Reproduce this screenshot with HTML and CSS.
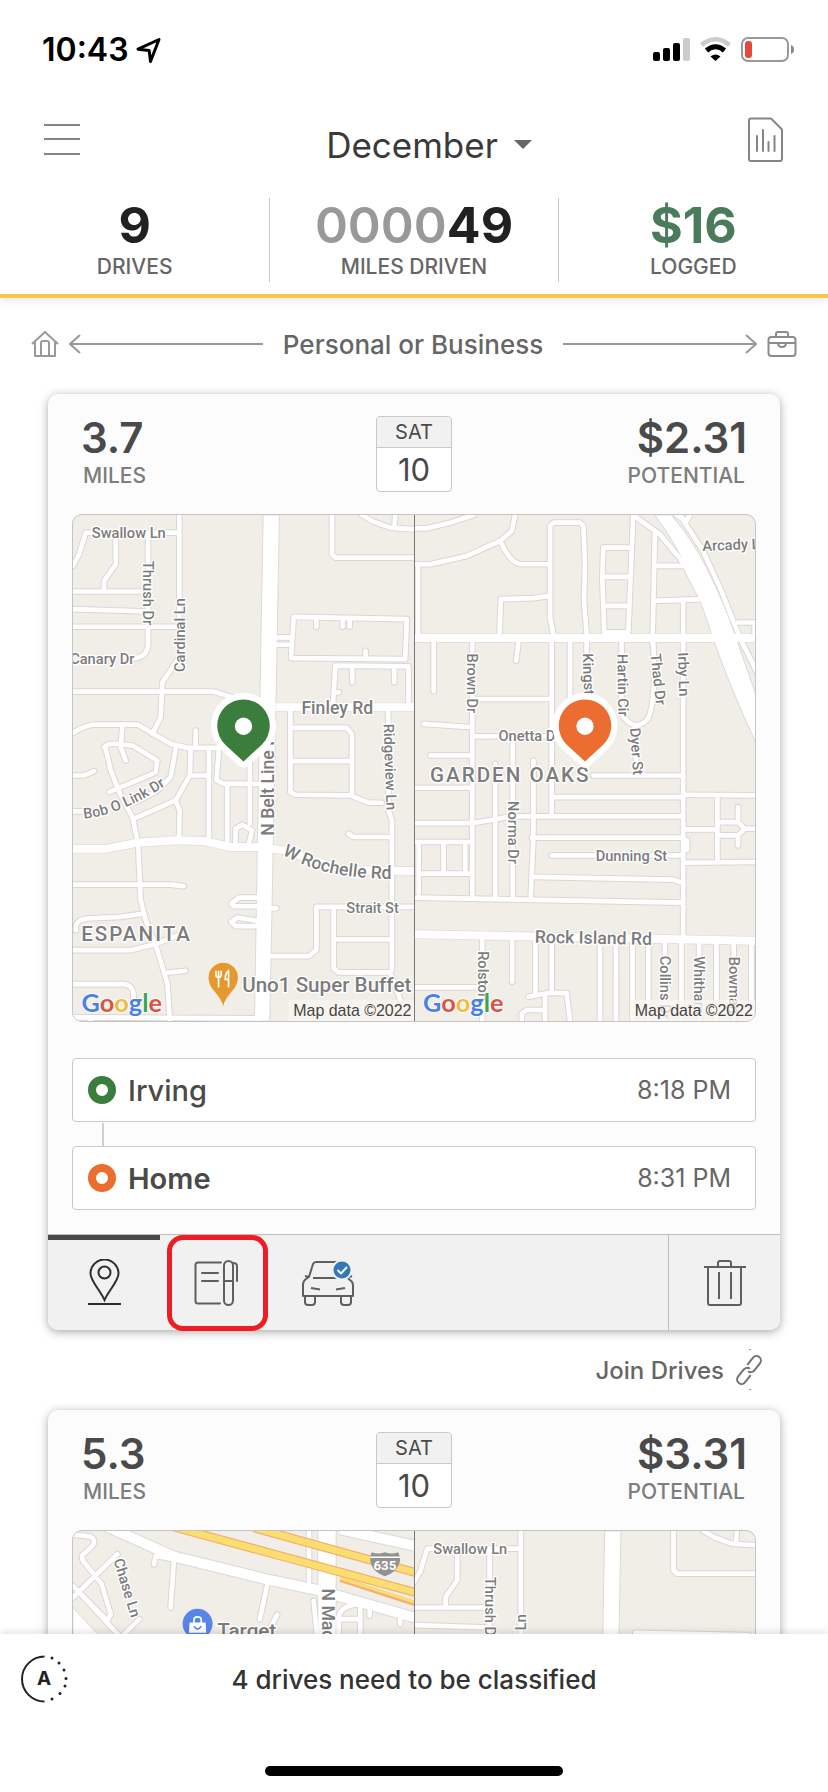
FILE: index.html
```html
<!DOCTYPE html>
<html lang="en">
<head>
<meta charset="utf-8">
<meta name="viewport" content="width=device-width, initial-scale=1">
<title>December drives</title>
<link rel="stylesheet" href="styles.css">
</head>
<body>
<svg class="defs" aria-hidden="true">
  <defs>
    <g id="irving-minor" fill="none">
      <path d="M36 195L55 160L75 95H355M165 100V190L130 240V270M262 100V430Q262 470 215 474M356 42V470L305 545L300 650L275 700M36 272H262M36 325L262 332M36 378H356"/>
      <path d="M36 573H460L550 600H600M185 672L180 740L195 780M405 690V742M275 820L145 875M130 740Q140 728 165 730L215 735L290 780L285 815"/>
      <path d="M345 745L330 830L290 870L225 905M390 745L388 825L345 900L220 955M345 900L357 930L355 1020M388 825H445M445 742V1030M475 742L468 840L490 850H590M500 850V1035M568 780V970M36 825H70L100 812M36 933H100M525 1030V985L545 973L575 990L565 1030"/>
      <path d="M36 1153H330L370 1158M45 1290Q40 1260 80 1255L180 1250L250 1240M36 1350H210L290 1330L365 1300M320 1418L375 1412M36 1452H190Q215 1455 218 1480V1510M36 1552L600 1555M90 1553V1563"/>
      <path d="M590 1192H535L512 1210Q515 1218 530 1218H590M590 1262L530 1252L512 1265L525 1278H590M610 1224H648"/>
      <path d="M815 42V160L825 170H1062M905 42L940 62L990 80L1062 85M1005 42L1003 78M645 410H690M645 432H690M700 348L1040 355L1035 475L692 472ZM768 352V378M847 352V378M868 352V378M916 450V474"/>
      <path d="M818 615L825 495L1045 497V605M876 500V545M1002 500V545M820 575H836M984 635L985 930L995 960V1410M690 635V875L705 883L870 885L925 907H965M690 682H860L875 700V885M690 782H875"/>
      <path d="M865 1000L880 1010H990M630 1368H745L768 1350V1220H1062M820 1220V1405L835 1417H990L1020 1500M820 1318H990"/>
    </g>
    <g id="irving-collector" fill="none">
      <path d="M36 697Q80 670 110 672L230 672L330 730L380 742H480M135 745L150 810L178 880L215 950L232 1030L240 1200L255 1260L290 1350L320 1450L328 1563"/>
    </g>
    <g id="irving-main" fill="none">
      <path d="M36 1045H140L230 1027L350 1020L430 1022L510 1040H600L670 1050L850 1110L1062 1112M645 620H1062"/>
    </g>
    <symbol id="map-irving" viewBox="36 42 1026 1521" preserveAspectRatio="xMidYMin slice">
      <use class="casing" href="#irving-minor"/>
      <use class="casing" href="#irving-collector"/>
      <use class="casing-mid" href="#irving-main"/>
      <path d="M608 42H657L645 700L628 1563H582L595 780Z" fill="#fff" stroke="#dcdad8" stroke-width="3"/>
      <use class="road" href="#irving-minor"/>
      <use class="road" href="#irving-collector"/>
      <use class="road-mid" href="#irving-main"/>
      <path id="bob" d="M70 955Q180 945 330 845" fill="none"/>
      <path id="rochelle" d="M665 1062Q760 1115 870 1128T1030 1132" fill="none"/>
      <g class="map-label">
        <text x="93" y="112">Swallow Ln</text>
        <text transform="translate(247 180) rotate(90)">Thrush Dr</text>
        <text transform="translate(372 514) rotate(-90)">Cardinal Ln</text>
        <text x="28" y="491">Canary Dr</text>
        <text transform="translate(970 670) rotate(88)">Ridgeview Ln</text>
        <text x="858" y="1237">Strait St</text>
        <text><textPath href="#bob">Bob O Link Dr</textPath></text>
      </g>
      <g class="map-label road-name">
        <text x="723" y="640">Finley Rd</text>
        <text transform="translate(640 1006) rotate(-90)">N Belt Line Rd</text>
        <text><textPath href="#rochelle">W Rochelle Rd</textPath></text>
      </g>
      <text class="map-label district" x="61" y="1322">ESPANITA</text>
      <text class="map-label place" x="545" y="1477">Uno1 Super Buffet</text>
      <path d="M488 1519C480 1480 444 1470 444 1432A44 44 0 0 1 532 1432C532 1470 496 1480 488 1519Z" fill="#e6982f"/>
      <path d="M466 1412V1424Q466 1432 474 1432Q482 1432 482 1424V1412M474 1412V1462M504 1462V1412Q494 1418 494 1438H504" fill="none" stroke="#fff" stroke-width="5"/>
    </symbol>

    <g id="home-minor" fill="none">
      <path d="M12 82H50L120 65L190 42M12 190H60L170 165L270 120L305 90L315 42M270 120Q300 185 330 190H415M23 190V400M268 400L272 295L370 292L415 285M430 400L420 350V75L430 65H510L520 75L525 190L522 300L530 400"/>
      <path d="M670 42L655 395M580 140H655M580 140L577 230L583 395H655M577 228H655M580 315H655M735 95L728 430M735 195H820M735 300L885 295M820 300V1310M985 365H1035V400M800 42L830 60L840 42"/>
      <path d="M70 425V572M186 425V1190M325 425L318 480M425 425V945M480 425V600M530 425V600M635 425V640Q670 695 710 660Q740 620 730 425M675 680L680 820M186 595H425M40 670L186 680M186 707H425M60 765H186M308 707V1190M370 780V1012L362 1190M255 790V1190"/>
      <path d="M12 862H186M12 968H190L265 955L300 948H820M550 825H820M425 890H820M365 1012H820M425 1065H820M368 1130L790 1138L810 1145M12 1192L820 1207M12 1025H186M25 1030V1180M100 1030V1120M165 1030V1120M30 1120H186"/>
      <path d="M820 883L1038 885M923 885V1085M820 987H923M820 1087L1038 1085M923 965H985L1005 985H1038M923 1005H985L1005 985M985 920V965M985 1005V1035M820 1020H832V1048H820"/>
      <path d="M216 1315V1563M306 1320V1445M12 1462H200M376 1320V1480M425 1320V1478M355 1490L420 1478L470 1480L480 1563M405 1490V1563M335 1563V1540L350 1530H400M570 1320V1563M618 1320V1563M668 1320V1563M715 1320V1563M765 1320V1563M815 1320V1563M868 1320V1563M920 1320V1563M972 1320V1563M1025 1320V1563"/>
      <path d="M670 42L750 100L820 185L880 300L920 410M810 42L880 150L935 270L990 410L1045 520"/>
    </g>
    <g id="home-main" fill="none"><path d="M12 412H1038M12 1302L1038 1322"/></g>

    <g id="target-minor" fill="none">
      <path d="M126 430L180 437Q200 450 180 470L155 492Q150 505 165 520L212 578L240 670L230 690L126 585M260 490L126 620M150 610L270 740M326 685L275 735M430 505L420 650M370 520L375 495L430 505M712 575L688 685M740 672L720 710M836 420V570M850 630L860 740M925 680V740M990 640V740M925 680Q930 645 985 640M1018 655V675M1110 680V700M920 685H990"/>
    </g>
    <g id="target-main" fill="none">
      <path d="M225 405L430 497L720 568L860 597L1160 682M930 415L1160 466"/>
    </g>
  </defs>
</svg>

<div class="app">
  <header class="top">
    <div class="status">
      <div class="status-left">
        <span class="clock">10:43</span>
        <svg width="28" height="28" viewBox="0 0 28 28" aria-label="Location in use"><path d="M24 3.500L3 13.200L14.200 14.600L15.500 25.500Z" fill="none" stroke="#000" stroke-width="3" stroke-linejoin="round"/></svg>
      </div>
      <svg width="144" height="28" viewBox="0 0 144 28" aria-label="Signal, Wi-Fi and battery">
        <rect x="1" y="16" width="7" height="9" rx="2"/><rect x="11" y="12" width="7" height="13" rx="2"/><rect x="21" y="7" width="7" height="18" rx="2"/><rect x="31" y="2" width="7" height="23" rx="2" fill="#ccc"/>
        <path d="M49.500 9Q63.500 -2.500 77.500 9" fill="none" stroke="#ccc" stroke-width="4.500"/>
        <path d="M54.500 14.500Q63.500 7 72.500 14.500" fill="none" stroke="#000" stroke-width="5"/>
        <path d="M58.500 20.500Q63.500 16.500 68.500 20.500L63.500 25Z"/>
        <rect x="90" y="2" width="46" height="23" rx="6" fill="none" stroke="#999" stroke-width="2"/>
        <rect x="93" y="5" width="7" height="17" rx="3" fill="#e5493a"/><path d="M139 9Q142 10 142 13.500T139 18Z" fill="#888"/>
      </svg>
    </div>
    <nav class="nav">
      <button class="icon-button" type="button" aria-label="Menu"><svg width="36" height="34" viewBox="0 0 36 34"><path d="M0 2H36M0 16H36M0 31H36" stroke="#858585" stroke-width="2"/></svg></button>
      <button class="month" type="button">December<svg width="18" height="10" viewBox="0 0 18 10"><path d="M0 0H18L9 9Z" fill="#666"/></svg></button>
      <button class="icon-button" type="button" aria-label="Reports"><svg width="36" height="46" viewBox="0 0 36 46" fill="none" stroke="#858585" stroke-width="2" stroke-linejoin="round" stroke-linecap="round"><path d="M3 1.500H23L34 12.500V41.500Q34 44 32 44H3Q1 44 1 42V3.500Q1 1.500 3 1.500Z"/><path d="M9 19V34M15 13V34M20.500 25V34M26.500 19V34"/></svg></button>
    </nav>
    <div class="stats">
      <div class="stat"><strong>9</strong><span>DRIVES</span></div>
      <div class="stat stat-wide"><strong><span class="zeros">0000</span>49</strong><span>MILES DRIVEN</span></div>
      <div class="stat"><strong class="money">$16</strong><span>LOGGED</span></div>
    </div>
  </header>

  <main class="feed">
    <div class="swipe">
      <svg width="28" height="28" viewBox="0 0 28 28" fill="none" stroke="#999" stroke-width="2" stroke-linejoin="round"><path d="M1 14L14 2L27 14M4 12V26H24V12M10 26V13Q10 11 12 11H16Q18 11 18 13V26"/></svg>
      <div class="arrow"><svg width="12" height="20" viewBox="0 0 12 20"><path d="M11 1L1 10L11 19" fill="none" stroke="#999" stroke-width="2"/></svg></div>
      <span class="swipe-text">Personal or Business</span>
      <div class="arrow arrow-right"><svg width="12" height="20" viewBox="0 0 12 20"><path d="M1 1L11 10L1 19" fill="none" stroke="#999" stroke-width="2"/></svg></div>
      <svg width="30" height="28" viewBox="0 0 30 28" fill="none" stroke="#8c8c8c" stroke-width="2" stroke-linejoin="round"><rect x="1.500" y="7" width="27" height="19" rx="3"/><path d="M9 7V4Q9 2 11 2H19Q21 2 21 4V7M2 13H28M11 13Q11 17 15 17T19 13"/></svg>
    </div>

    <article class="card">
      <div class="card-head">
        <div class="figure"><strong>3.7</strong><span>MILES</span></div>
        <div class="date"><span>SAT</span><b>10</b></div>
        <div class="figure figure-right"><strong>$2.31</strong><span>POTENTIAL</span></div>
      </div>
      <div class="maps">
        <div class="map">
          <svg class="map-art" viewBox="36 42 1026 1521" preserveAspectRatio="xMidYMin slice" role="img" aria-label="Start in Irving">
            <use href="#map-irving" x="36" y="42" width="1026" height="1521"/>
            <path d="M549 783L495 733A79 79 0 1 1 603 733Z" fill="#3b7d3c" stroke="#fff" stroke-width="38" stroke-linejoin="round" paint-order="stroke"/><circle cx="549" cy="677" r="26" fill="#fff"/>
            <rect x="685" y="1500" width="377" height="63" fill="#f8f6f2" opacity=".75"/>
            <text class="google" x="62" y="1535"><tspan fill="#4b80e8">G</tspan><tspan fill="#d95345">o</tspan><tspan fill="#edbd3b">o</tspan><tspan fill="#4b80e8">g</tspan><tspan fill="#3da457">l</tspan><tspan fill="#d95345">e</tspan></text>
            <text class="credit" x="1054" y="1549">Map data ©2022</text>
          </svg>
        </div>
        <div class="map">
          <svg class="map-art" viewBox="12 42 1026 1521" preserveAspectRatio="xMidYMin slice" role="img" aria-label="End at Home">
            <use class="casing" href="#home-minor"/>
            <use class="casing-mid" href="#home-main"/>
            <path d="M735 42H785Q850 120 890 200Q950 320 975 400L1045 600V740Q960 560 905 400Q840 180 735 42Z" fill="#fff" stroke="#d9d9d9" stroke-width="3"/>
            <use class="road" href="#home-minor"/>
            <use class="road-mid" href="#home-main"/>
            <g class="map-label">
              <text transform="translate(878 150) rotate(-2)">Arcady Ln</text>
              <text transform="translate(171 458) rotate(90)">Brown Dr</text>
              <text transform="translate(518 458) rotate(88)">Kingston</text>
              <text transform="translate(622 460) rotate(89)">Hartin Cir</text>
              <text transform="translate(722 460) rotate(84)">Thad Dr</text>
              <text transform="translate(804 455) rotate(88)">Irby Ln</text>
              <text x="265" y="722">Onetta Dr</text>
              <text transform="translate(660 683) rotate(86)">Dyer St</text>
              <text transform="translate(293 902) rotate(90)">Norma Dr</text>
              <text x="557" y="1082">Dunning St</text>
              <text transform="translate(202 1353) rotate(90)">Rolston</text>
              <text transform="translate(750 1367) rotate(90)">Collins Dr</text>
              <text transform="translate(853 1368) rotate(90)">Whitham</text>
              <text transform="translate(958 1370) rotate(90)">Bowman</text>
            </g>
            <text class="map-label road-name" transform="translate(374 1328) rotate(1)">Rock Island Rd</text>
            <text class="map-label district" x="59" y="844">GARDEN OAKS</text>
            <path d="M525 783L471 733A79 79 0 1 1 579 733Z" fill="#ec6d30" stroke="#fff" stroke-width="38" stroke-linejoin="round" paint-order="stroke"/><circle cx="525" cy="677" r="26" fill="#fff"/>
            <rect x="660" y="1500" width="378" height="63" fill="#f8f6f2" opacity=".75"/>
            <text class="google" x="38" y="1535"><tspan fill="#4b80e8">G</tspan><tspan fill="#d95345">o</tspan><tspan fill="#edbd3b">o</tspan><tspan fill="#4b80e8">g</tspan><tspan fill="#3da457">l</tspan><tspan fill="#d95345">e</tspan></text>
            <text class="credit" x="1030" y="1549">Map data ©2022</text>
          </svg>
        </div>
      </div>
      <div class="stops">
        <div class="stop"><i class="ring"></i><span class="stop-name">Irving</span><time>8:18 PM</time></div>
        <div class="stop"><i class="ring ring-end"></i><strong class="stop-name">Home</strong><time>8:31 PM</time></div>
      </div>
      <div class="tools">
        <button class="tool tool-active" type="button" aria-label="Route"><svg width="36" height="48" viewBox="0 0 36 48" fill="none" stroke="#2e2e2e" stroke-width="2"><path d="M18.500 41C14 31 4.500 22 4.500 14.500A14 14 0 0 1 32.500 14.500C32.500 22 23 31 18.500 41Z"/><circle cx="18.500" cy="13.500" r="6"/><path d="M2 45H35"/></svg></button>
        <button class="tool tool-marked" type="button" aria-label="Notes"><svg width="44" height="48" viewBox="0 0 44 48" fill="none" stroke="#5f5f5f" stroke-width="2" stroke-linecap="round"><path d="M27 3.500H4Q1.500 3.500 1.500 6V42Q1.500 44.500 4 44.500H26M8 14H24M8 22H24"/><rect x="30" y="2" width="9" height="44" rx="4.500"/><path d="M30 22H39M39 4Q43 4 43 7V22"/></svg></button>
        <button class="tool" type="button" aria-label="Vehicle"><svg width="54" height="50" viewBox="0 0 54 50" fill="none" stroke="#5f5f5f" stroke-width="2" stroke-linejoin="round"><path d="M2 38V27Q2 23 5 21L8 19L12 6Q13 4 15 4H37Q39 4 40 6L45 19L49 22Q52 24 52 27V38ZM4 18L8 19M51 18L46 20M12 20H41M10 30L19 31.500M44 30L35 31.500"/><path d="M4 38V44Q4 47 7 47H11Q14 47 14 44V38M40 38V44Q40 47 43 47H47Q50 47 50 44V38"/><circle cx="41" cy="12" r="9.500" fill="#3577bc" stroke="#f1f1f1"/><path d="M36.500 12L40 15.500L46 9" stroke="#fff"/></svg></button>
        <button class="tool tool-delete" type="button" aria-label="Delete drive"><svg width="44" height="48" viewBox="0 0 44 48" fill="none" stroke="#5f5f5f" stroke-width="2"><path d="M1 8H43M5 8V44Q5 46 7 46H36Q38 46 38 44V8M15 8V4Q15 2 17 2H26Q28 2 28 4V8M16 13V40M28 13V40"/></svg></button>
      </div>
    </article>

    <div class="join-row">
      <button class="join" type="button">Join Drives<svg width="28" height="44" viewBox="0 0 28 44" fill="none" stroke="#737373" stroke-width="2"><path d="M14 1V2M14 41V42" stroke="#333" stroke-width="1"/><g transform="rotate(38 13 22)"><path d="M8.500 19V10A4.500 4.500 0 0 1 17.500 10V19A4.500 4.500 0 0 1 13 23.500"/><path d="M17.500 25V34A4.500 4.500 0 0 1 8.500 34V25A4.500 4.500 0 0 1 13 20.500"/></g></svg></button>
    </div>

    <article class="card">
      <div class="card-head">
        <div class="figure"><strong>5.3</strong><span>MILES</span></div>
        <div class="date"><span>SAT</span><b>10</b></div>
        <div class="figure figure-right"><strong>$3.31</strong><span>POTENTIAL</span></div>
      </div>
      <div class="maps">
        <div class="map">
          <svg class="map-art" viewBox="126 420 1026 1521" preserveAspectRatio="xMidYMin slice" role="img" aria-label="Start near Target">
            <path d="M126 650L210 740H126Z" fill="#fff" stroke="#d9d9d9" stroke-width="3"/>
            <use class="casing" href="#target-minor"/>
            <g stroke="#d9d9d9" stroke-width="36"><use href="#target-main"/><path d="M890 420V760" stroke-width="58"/></g>
            <use class="road" href="#target-minor"/>
            <g stroke="#fff" stroke-width="30"><use href="#target-main"/><path d="M890 420V760" stroke-width="52"/></g>
            <g fill="none" stroke="#f5ad72" stroke-width="27"><path d="M430 408L1160 606M670 410L1160 546"/><path d="M930 565L1160 640" stroke-width="16"/></g>
            <g fill="none" stroke="#fadf70" stroke-width="20"><path d="M430 408L1160 606M670 410L1160 546"/><path d="M930 562L1160 636" stroke-width="9"/></g>
            <path d="M1024 484Q1044 492 1064 484Q1084 492 1104 484L1110 500Q1110 540 1064 556Q1018 540 1020 500Z" fill="#929292"/><path d="M1020 499H1110" stroke="#fff" stroke-width="4"/>
            <text class="shield" x="1064" y="538">635</text>
            <text class="map-label" transform="translate(248 508) rotate(73)">Chase Ln</text>
            <text class="map-label road-name" transform="translate(876 593) rotate(90)">N MacArthur</text>
            <circle cx="501" cy="699" r="45" fill="#5785e8"/><path d="M477 695H525L527 726H475Z" fill="#fff"/><path d="M490 697V688Q490 678 501 678T512 688V697" fill="none" stroke="#fff" stroke-width="5"/><path d="M490 706Q501 724 512 706" fill="none" stroke="#5785e8" stroke-width="5"/>
            <text class="map-label place" x="560" y="741">Target</text>
          </svg>
        </div>
        <div class="map">
          <svg class="map-art" viewBox="36 42 1026 1521" preserveAspectRatio="xMidYMin slice" role="img" aria-label="End in Irving"><use href="#map-irving" x="36" y="42" width="1026" height="1521"/></svg>
        </div>
      </div>
    </article>
  </main>

  <footer class="bottom">
    <div class="notice">
      <svg width="50" height="50" viewBox="0 0 50 50" aria-label="Auto-classify"><path d="M24.500 2.500A22.500 22.500 0 0 0 24.500 47.500" fill="none" stroke="#222" stroke-width="2"/><g fill="#222"><circle cx="32" cy="4" r="1.500"/><circle cx="39" cy="9" r="1.500"/><circle cx="44" cy="16" r="1.500"/><circle cx="46" cy="24.500" r="1.500"/><circle cx="45" cy="32" r="1.500"/><circle cx="40" cy="39.500" r="1.500"/><circle cx="32" cy="45" r="1.500"/></g><text class="auto" x="24" y="31">A</text></svg>
      <p>4 drives need to be classified</p>
    </div>
    <div class="home-bar"></div>
  </footer>
</div>
</body>
</html>
```
FILE: styles.css
```css
* { box-sizing: border-box; }

body {
  margin: 0;
  background: #fff;
  color: #4a4a4a;
  font-family: Inter, "Liberation Sans", sans-serif;
}

button {
  border: 0;
  padding: 0;
  background: none;
  color: inherit;
  font: inherit;
}

svg { display: block; flex: none; }
.defs { position: absolute; width: 0; height: 0; }

.app {
  display: flex;
  flex-direction: column;
  height: 100vh;
  overflow: hidden;
}

/* Header */
.top {
  position: relative;
  z-index: 1;
  flex: none;
  padding-top: 34px;
  padding-bottom: 12px;
  border-bottom: 4px solid #f5c84c;
  background: #fff;
  box-shadow: 0 2px 8px rgba(0, 0, 0, .1);
}

.status {
  display: flex;
  align-items: center;
  justify-content: space-between;
  padding: 0 32px 0 42px;
}

.status-left { display: flex; align-items: center; gap: 6px; }
.clock { color: #000; font-size: 32px; font-weight: 600; line-height: 32px; }

.nav {
  display: flex;
  align-items: center;
  justify-content: space-between;
  height: 56px;
  margin-top: 46px;
  padding: 0 44px;
}

.month {
  display: flex;
  align-items: center;
  gap: 16px;
  padding: 10px 0 0 30px;
  color: #3a3a3a;
  font-size: 35px;
  line-height: 40px;
}

.stats { display: flex; margin-top: 30px; }

.stat {
  flex: 15;
  display: flex;
  flex-direction: column;
  align-items: center;
}

.stat-wide {
  flex: 16;
  border: solid #c8c8c8;
  border-width: 0 1px;
}

.stat strong { color: #212121; font-size: 50px; font-weight: 700; line-height: 54px; }
.stat > span { color: #666; font-size: 21px; font-weight: 500; line-height: 30px; }
.stat .zeros { color: #999; font-weight: 600; }
.stat .money { color: #4a7c5c; }

/* Drive feed */
.feed { flex: 1; min-height: 0; overflow: hidden; padding-top: 28px; }

.swipe {
  display: flex;
  align-items: center;
  gap: 10px;
  height: 36px;
  margin-bottom: 32px;
  padding: 0 31px;
}

.swipe-text { margin: 0 10px; color: #666; font-size: 26px; font-weight: 500; }

.arrow { flex: 1; display: flex; align-items: center; }
.arrow::after { content: ""; flex: 1; height: 2px; margin-left: -11px; background: #999; }
.arrow-right { flex-direction: row-reverse; }
.arrow-right::after { margin: 0 -11px 0 0; }

.card {
  margin: 0 48px;
  border-radius: 10px;
  background: #fcfcfc;
  box-shadow: 0 2px 10px rgba(0, 0, 0, .35);
}

.card-head {
  display: grid;
  grid-template-columns: 1fr 76px 1fr;
  padding: 22px 33px;
}

.figure { display: flex; flex-direction: column; }
.figure-right { align-items: flex-end; }
.figure strong { color: #4a4a4a; font-size: 42px; font-weight: 600; line-height: 44px; }
.figure span { padding: 0 2px; color: #7d7d7d; font-size: 21px; font-weight: 500; line-height: 32px; }

.date {
  border: 1px solid #c8c8c8;
  border-radius: 4px;
  overflow: hidden;
  background: #fff;
  text-align: center;
}

.date span, .date b { display: block; }
.date span { border-bottom: 1px solid #c8c8c8; background: #f1f1f1; font-size: 20px; line-height: 30px; }
.date b { font-size: 31px; font-weight: 400; line-height: 43px; }

.maps {
  display: grid;
  grid-template-columns: 1fr 1fr;
  aspect-ratio: 684 / 508;
  margin: 0 24px;
  border: 1px solid #c4c4c4;
  border-radius: 10px;
  overflow: hidden;
  background: #f1eee8;
}

.map { min-width: 0; min-height: 0; overflow: hidden; }
.map + .map { border-left: 1px solid #777; }
.map-art { width: 100%; height: 100%; }

.casing { stroke: #d8d7d6; stroke-width: 20px; stroke-linecap: round; stroke-linejoin: round; }
.road { stroke: #fff; stroke-width: 14px; stroke-linecap: round; stroke-linejoin: round; }
.casing-mid { stroke: #dcdad8; stroke-width: 28px; stroke-linejoin: round; }
.road-mid { stroke: #fff; stroke-width: 24px; stroke-linejoin: round; }

.map-label {
  fill: #7c7c7c;
  stroke: #fff;
  stroke-width: 8px;
  stroke-linejoin: round;
  paint-order: stroke;
  font-family: Roboto, sans-serif;
  font-size: 44px;
  font-weight: 500;
}

.road-name { font-size: 53px; }
.place { font-size: 62px; }
.district { font-size: 62px; letter-spacing: 6px; }
.shield { fill: #fff; font: 700 40px Roboto, sans-serif; text-anchor: middle; }
.google { stroke: #fff; stroke-width: 5px; paint-order: stroke; font: 700 76px Lato, sans-serif; }
.credit { fill: #444; font: 48px "Liberation Sans", sans-serif; text-anchor: end; }

/* Start and end rows */
.stops { display: flex; flex-direction: column; gap: 24px; padding: 36px 24px 24px; }

.stop {
  position: relative;
  display: flex;
  align-items: center;
  height: 64px;
  padding: 0 24px 0 15px;
  border: 1px solid #c8c8c8;
  border-radius: 4px;
  background: #fff;
}

.stop + .stop::before {
  content: "";
  position: absolute;
  bottom: 100%;
  left: 29px;
  width: 2px;
  height: 24px;
  background: #d0d0d0;
}

.ring { width: 28px; height: 28px; border: 8px solid #3b7d3c; border-radius: 50%; }
.ring-end { border-color: #ec6d30; }
.stop-name { flex: 1; margin-left: 12px; font-size: 29px; font-weight: 500; }
strong.stop-name { font-weight: 600; }
.stop time { color: #666; font-size: 25px; }

/* Card toolbar */
.tools {
  display: flex;
  height: 96px;
  border-top: 1px solid #bdbdbd;
  border-radius: 0 0 10px 10px;
  background: #f1f1f1;
}

.tool { position: relative; display: grid; place-items: center; width: 112px; }
.tool-active { box-shadow: inset 0 5px #4a4a4a; }
.tool-delete { margin-left: auto; border-left: 1px solid #bdbdbd; }

.tool-marked::after {
  content: "";
  position: absolute;
  inset: 0 4px -1px 7px;
  border: 5px solid #ee1c24;
  border-radius: 16px;
}

.join-row { display: flex; justify-content: flex-end; height: 80px; padding: 0 64px; }
.join { display: flex; align-items: center; gap: 12px; color: #666; font-size: 24px; font-weight: 500; }

/* Footer */
.bottom {
  position: relative;
  z-index: 1;
  flex: none;
  height: 158px;
  background: #fff;
  box-shadow: 0 -2px 8px rgba(0, 0, 0, .12);
}

.notice {
  display: grid;
  grid-template-columns: 50px 1fr 50px;
  align-items: center;
  height: 90px;
  padding: 0 20px;
}

.notice p { margin: 0; color: #333; font-size: 26px; font-weight: 500; text-align: center; }
.auto { fill: #222; font-size: 19px; font-weight: 700; text-anchor: middle; }
.home-bar { width: 36%; height: 10px; margin: 42px auto 0; border-radius: 5px; background: #000; }
```
